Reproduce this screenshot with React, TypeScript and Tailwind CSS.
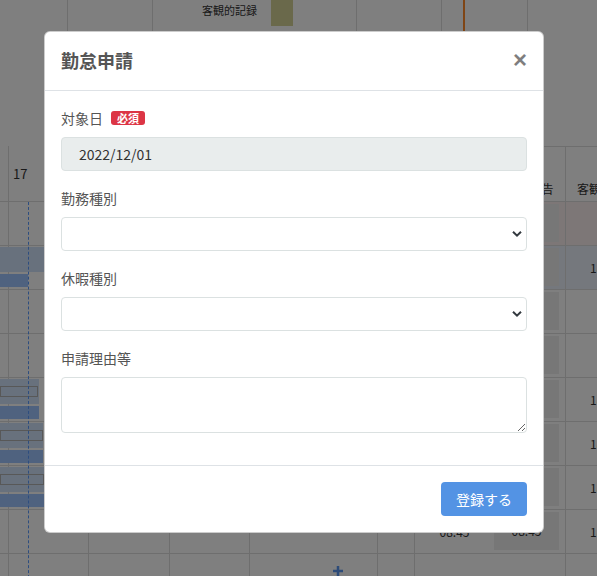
import { useState } from 'react';

const grid = 'grid grid-cols-[8px_80px_81px_80px_128px_37px_80px_71px_1fr]';

type Row = {
  tint?: string;
  bar?: { band: number; box?: number; dark: number };
  time?: string;
  right?: string;
};

const rows: Row[] = [
  { tint: 'bg-[#fbefef]' },
  { tint: 'bg-[#eaf1fa]', bar: { band: 120, dark: 28 }, right: '18:00' },
  {},
  {},
  { bar: { band: 39, box: 38, dark: 39 }, right: '18:00' },
  { bar: { band: 43, box: 43, dark: 43 }, right: '18:00' },
  { bar: { band: 44, box: 44, dark: 44 }, right: '18:00' },
  { time: '08:45', right: '18:00' },
];

function Legend() {
  return (
    <div className="h-[146px]">
      <div className="ml-[67px] flex h-[36px]">
        <div className="w-[85px] border-l border-[#dcdcdc]" />
        <div className="flex w-[204px] items-start border-l border-[#dcdcdc] pl-[49px]">
          <span className="whitespace-nowrap text-[11px] leading-[20px] text-[#333]">客観的記録</span>
          <span className="ml-[14px] h-[26px] w-[22px] bg-[#d4d296]" />
        </div>
        <div className="w-[85px] border-l border-[#dcdcdc]" />
        <div className="relative w-[87px] border-x border-[#dcdcdc]">
          <span className="absolute left-[21px] top-0 h-full w-[2px] bg-[#ff8a2a]" />
        </div>
      </div>
    </div>
  );
}

function TimeTable() {
  return (
    <div className="relative text-[12px] text-[#333]">
      <div className={`${grid} h-[56px] border-b border-[#dcdcdc]`}>
        <div />
        <div className="flex items-center border-l border-[#dcdcdc] pl-[4px] text-[13px]">17</div>
        <div className="border-l border-[#dcdcdc]" />
        <div className="border-l border-[#dcdcdc]" />
        <div className="border-l border-[#dcdcdc]" />
        <div className="border-l border-[#dcdcdc]" />
        <div className="border-l border-t border-[#dcdcdc]" />
        <div className="flex items-end justify-center whitespace-nowrap border-t border-[#dcdcdc] pb-[3px]">自己申告</div>
        <div className="flex items-end overflow-hidden whitespace-nowrap border-l border-t border-[#dcdcdc] pb-[3px] pl-[11px]">客観的記録</div>
      </div>

      {rows.map((row, i) => (
        <div key={i} className={`${grid} relative h-[44px] border-b border-[#dcdcdc]`}>
          <div />
          <div className="border-l border-[#dcdcdc]" />
          <div className="border-l border-[#dcdcdc]" />
          <div className="border-l border-[#dcdcdc]" />
          <div className="border-l border-[#dcdcdc]" />
          <div className="border-l border-[#dcdcdc]" />
          <div className={`flex items-center justify-center border-l border-[#dcdcdc] ${row.tint ?? ''}`}>{row.time}</div>
          <div className={`pt-[2px] ${row.tint ?? ''}`}>
            <div className="flex h-[38px] w-[65px] items-center justify-center bg-[#efefef]">{row.time}</div>
          </div>
          <div className={`flex items-center overflow-hidden whitespace-nowrap border-l border-[#dcdcdc] pl-[24px] ${row.tint ?? ''}`}>
            {row.right}
          </div>

          {row.bar && (
            <>
              <span className="absolute left-0 top-[1px] h-[25px] bg-[#d0e3fa]" style={{ width: row.bar.band }} />
              {row.bar.box && (
                <span className="absolute left-0 top-[8px] h-[11px] border border-[#b0b0b0]" style={{ width: row.bar.box }} />
              )}
              <span className="absolute left-0 top-[28px] h-[13px] bg-[#9ec5fe]" style={{ width: row.bar.dark }} />
            </>
          )}
        </div>
      ))}

      <div className={`${grid} h-[44px] border-b border-[#dcdcdc]`}>
        <div />
        <div className="border-l border-[#dcdcdc]" />
        <div className="border-l border-[#dcdcdc]" />
        <div className="border-l border-[#dcdcdc]" />
        <div className="border-l border-[#dcdcdc] pl-[82px] pt-[11px]">
          <svg width="12" height="12" viewBox="0 0 12 12">
            <path d="M6 1v10M1 6h10" stroke="#5a96f0" strokeWidth="2.5" />
          </svg>
        </div>
        <div className="border-l border-[#dcdcdc]" />
        <div className="border-l border-[#dcdcdc]" />
        <div />
        <div className="border-l border-[#dcdcdc]" />
      </div>

      <span className="absolute bottom-0 left-[28px] top-[56px] border-l border-dashed border-[#5b9bff]" />
    </div>
  );
}

function Chevron() {
  return (
    <svg className="pointer-events-none absolute right-[5px] top-1/2 -translate-y-1/2" width="10" height="7" viewBox="0 0 10 7">
      <path d="M1 1.2l4 4 4-4" fill="none" stroke="#343a40" strokeWidth="2" />
    </svg>
  );
}

function SelectField({ label, value, onChange }: { label: string; value: string; onChange: (v: string) => void }) {
  return (
    <div className="mb-4">
      <label className="mb-2 block text-[14px] leading-[22px] text-[#555]">{label}</label>
      <div className="relative">
        <select
          value={value}
          onChange={e => onChange(e.target.value)}
          className="block h-[34px] w-full appearance-none rounded-[4px] border border-[#dbe1e1] bg-white px-3 text-[14px] text-[#333]"
        >
          <option value="" />
        </select>
        <Chevron />
      </div>
    </div>
  );
}

function AttendanceModal() {
  const [workType, setWorkType] = useState('');
  const [leaveType, setLeaveType] = useState('');
  const [reason, setReason] = useState('');

  return (
    <div className="w-[500px] rounded-md border border-black/20 bg-white">
      <div className="flex h-[59px] items-center justify-between border-b border-[#dee2e6] px-4 pb-[2px]">
        <h5 className="text-[18px] font-bold leading-[27px] text-[#555]">勤怠申請</h5>
        <button className="font-['Liberation_Sans',sans-serif] text-[24px] font-bold leading-none text-black opacity-50">×</button>
      </div>

      <div className="px-4 py-4">
        <div className="mb-4">
          <label className="mb-2 flex items-center text-[14px] leading-[22px] text-[#555]">
            対象日
            <span className="ml-2 rounded-[3px] bg-[#dc3545] px-[6px] text-[11px] font-bold leading-[14px] text-white">必須</span>
          </label>
          <input
            readOnly
            value="2022/12/01"
            className="block h-[34px] w-full rounded-[4px] border border-[#dbe1e1] bg-[#e9eded] pl-[17px] text-[14px] text-[#333]"
          />
        </div>

        <SelectField label="勤務種別" value={workType} onChange={setWorkType} />
        <SelectField label="休暇種別" value={leaveType} onChange={setLeaveType} />

        <div className="mb-4">
          <label className="mb-2 block text-[14px] leading-[22px] text-[#555]">申請理由等</label>
          <textarea
            value={reason}
            onChange={e => setReason(e.target.value)}
            className="block h-[56px] w-full rounded-[4px] border border-[#dbe1e1] px-3 py-1 text-[14px] text-[#333]"
          />
        </div>
      </div>

      <div className="flex justify-end border-t border-[#dee2e6] p-4">
        <button className="h-[34px] rounded-[4px] bg-[#5393e4] px-[15px] text-[14px] text-white">登録する</button>
      </div>
    </div>
  );
}

export default function App() {
  return (
    <div className="relative h-[576px] w-[597px] overflow-hidden bg-white font-['Noto_Sans_CJK_JP','Noto_Sans',sans-serif]">
      <Legend />
      <TimeTable />

      <div className="absolute inset-0 bg-black/50" />

      <div className="absolute left-[44px] top-[31px]">
        <AttendanceModal />
      </div>
    </div>
  );
}
